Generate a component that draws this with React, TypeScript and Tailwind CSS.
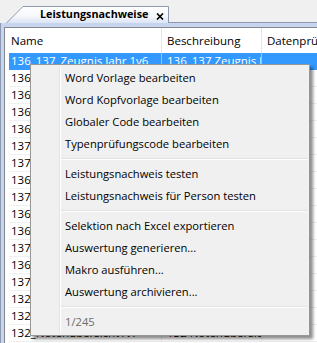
import React from "react";

const rows: [string, string][] = [
  ["136_137_Zeugnis Jahr 1v6", "136_137 Zeugnis Jahr 1v6"],
  ["136_Zeugnis Semester 1v6", "136 Zeugnis Semester 1v6"],
  ["136_Zeugnis Jahr 2v6", "136 Zeugnis Jahr 2v6"],
  ["136_Zeugnis Semester 2v6", "136 Zeugnis Semester 2v6"],
  ["136_Zwischenbericht 1v6", "136 Zwischenbericht 1v6"],
  ["137_Zeugnis Jahr 1v6", "137 Zeugnis Jahr 1v6"],
  ["137_Zeugnis Semester 1v6", "137 Zeugnis Semester 1v6"],
  ["136_Notenübersicht 1v6", "136 Notenübersicht 1v6"],
  ["137_Notenübersicht 1v6", "137 Notenübersicht 1v6"],
  ["136_Lernbericht 1v6", "136 Lernbericht 1v6"],
  ["136_Lernbericht 2v6", "136 Lernbericht 2v6"],
  ["137_Lernbericht 1v6", "137 Lernbericht 1v6"],
  ["136_Beurteilung 1v6", "136 Beurteilung 1v6"],
  ["137_Beurteilung 1v6", "137 Beurteilung 1v6"],
  ["132_Zeugnis Jahr 1v7", "132 Zeugnis Jahr 1v7"],
  ["132_Zeugnis Semester 1v7", "132 Zeugnis Semester 1v7"],
  ["132_Notenübersicht1v7", "132 Notenübersicht 1v7"],
];

type MenuEntry = { sep: true } | { label: string; disabled?: boolean };

const menu: MenuEntry[] = [
  { label: "Word Vorlage bearbeiten" },
  { label: "Word Kopfvorlage bearbeiten" },
  { label: "Globaler Code bearbeiten" },
  { label: "Typenprüfungscode bearbeiten" },
  { sep: true },
  { label: "Leistungsnachweis testen" },
  { label: "Leistungsnachweis für Person testen" },
  { sep: true },
  { label: "Selektion nach Excel exportieren" },
  { label: "Auswertung generieren..." },
  { label: "Makro ausführen..." },
  { label: "Auswertung archivieren..." },
  { sep: true },
  { label: "1/245", disabled: true },
];

export default function App() {
  return (
    <div className="relative w-[317px] h-[343px] overflow-hidden bg-[#f0f0f0] font-['Open_Sans',sans-serif] text-[11.5px] text-black leading-none">
      {/* tab strip */}
      <div className="flex h-[23px] items-end">
        <div className="w-[6px] h-full" />
        <div className="relative w-[163px] h-[17px] shrink-0">
          <svg className="absolute inset-0" width="163" height="17" viewBox="0 0 163 17">
            <defs>
              <linearGradient id="tabg" x1="0" y1="0" x2="0" y2="1">
                <stop offset="0" stopColor="#ffffff" />
                <stop offset="0.55" stopColor="#f6f8fc" />
                <stop offset="1" stopColor="#d9e3f5" />
              </linearGradient>
            </defs>
            <path d="M0 17.5 L17 0.5 H162.5 V17.5" fill="url(#tabg)" stroke="#8d99b0" strokeWidth="1" />
          </svg>
          <span className="absolute left-[34px] top-[1px] h-[15px] flex items-center font-bold text-[10.8px]">
            Leistungsnachweise
          </span>
          <svg className="absolute left-[150px] top-[7px]" width="8" height="7" viewBox="0 0 8 7">
            <path d="M1 0.5 L7 6.5 M7 0.5 L1 6.5" stroke="#000" strokeWidth="1.6" />
          </svg>
        </div>
        <div className="flex-1 h-full border-b border-[#8d99b0]" />
      </div>

      {/* panel */}
      <div className="flex h-[320px]">
        <div className="w-[6px] bg-[#e4e8f0]" />
        <div className="flex-1 border-l border-[#8d99b0] bg-[#c7d5ef] pl-[3px] pt-[4px]">
          <div className="h-full border-l border-t border-[#828790] bg-white">
            {/* header */}
            <div className="flex h-[25px] items-center">
              <div className="w-[157px] h-full border-r border-[#e3e5e8] pl-[6px] flex items-center">Name</div>
              <div className="w-[100px] h-full border-r border-[#e3e5e8] pl-[5px] flex items-center">Beschreibung</div>
              <div className="flex-1 h-full pl-[5px] flex items-center whitespace-nowrap overflow-hidden">Datenprüfung</div>
            </div>
            {/* rows */}
            <div className="pl-[4px]">
              {rows.map(([a, b], i) => {
                const sel = i === 0;
                return (
                  <div
                    key={i}
                    className={
                      sel
                        ? "flex h-[17px] bg-[#3399ff] text-white border-b border-[#3399ff]"
                        : "flex h-[17px] border-b border-[#f0f0f0]"
                    }
                  >
                    <div
                      className={
                        sel
                          ? "w-[153px] border-r border-[#8cc4ff] pl-[2px] flex items-center whitespace-nowrap overflow-hidden"
                          : "w-[153px] border-r border-[#f0f0f0] pl-[2px] flex items-center whitespace-nowrap overflow-hidden"
                      }
                    >
                      {a}
                    </div>
                    <div
                      className={
                        sel
                          ? "w-[100px] border-r border-[#8cc4ff] pl-[5px] pr-[14px] flex items-center whitespace-nowrap overflow-hidden"
                          : "w-[100px] border-r border-[#f0f0f0] pl-[5px] pr-[8px] flex items-center whitespace-nowrap overflow-hidden"
                      }
                    >
                      {b}
                    </div>
                    <div className="flex-1" />
                  </div>
                );
              })}
            </div>
          </div>
        </div>
      </div>

      {/* context menu */}
      <div className="absolute left-[30px] top-[64px] w-[280px] border border-[#979797] bg-[#f0f0f0] py-[2px] text-[11.2px] shadow-[3px_3px_3px_rgba(0,0,0,0.45)]">
        <div className="absolute left-[28px] top-[2px] bottom-[2px] w-px bg-[#e2e3e3]" />
        <div className="absolute left-[29px] top-[2px] bottom-[2px] w-px bg-white" />
        {menu.map((m, i) =>
          "sep" in m ? (
            <div key={i} className="h-[8px] pl-[30px] pr-[2px] flex flex-col justify-center">
              <div className="h-px bg-[#e0e0e0]" />
              <div className="h-px bg-white" />
            </div>
          ) : (
            <div
              key={i}
              className={
                m.disabled
                  ? "relative h-[22px] pl-[34px] flex items-center text-[#6d6d6d]"
                  : "relative h-[22px] pl-[34px] flex items-center"
              }
            >
              {m.label}
            </div>
          )
        )}
      </div>
    </div>
  );
}
